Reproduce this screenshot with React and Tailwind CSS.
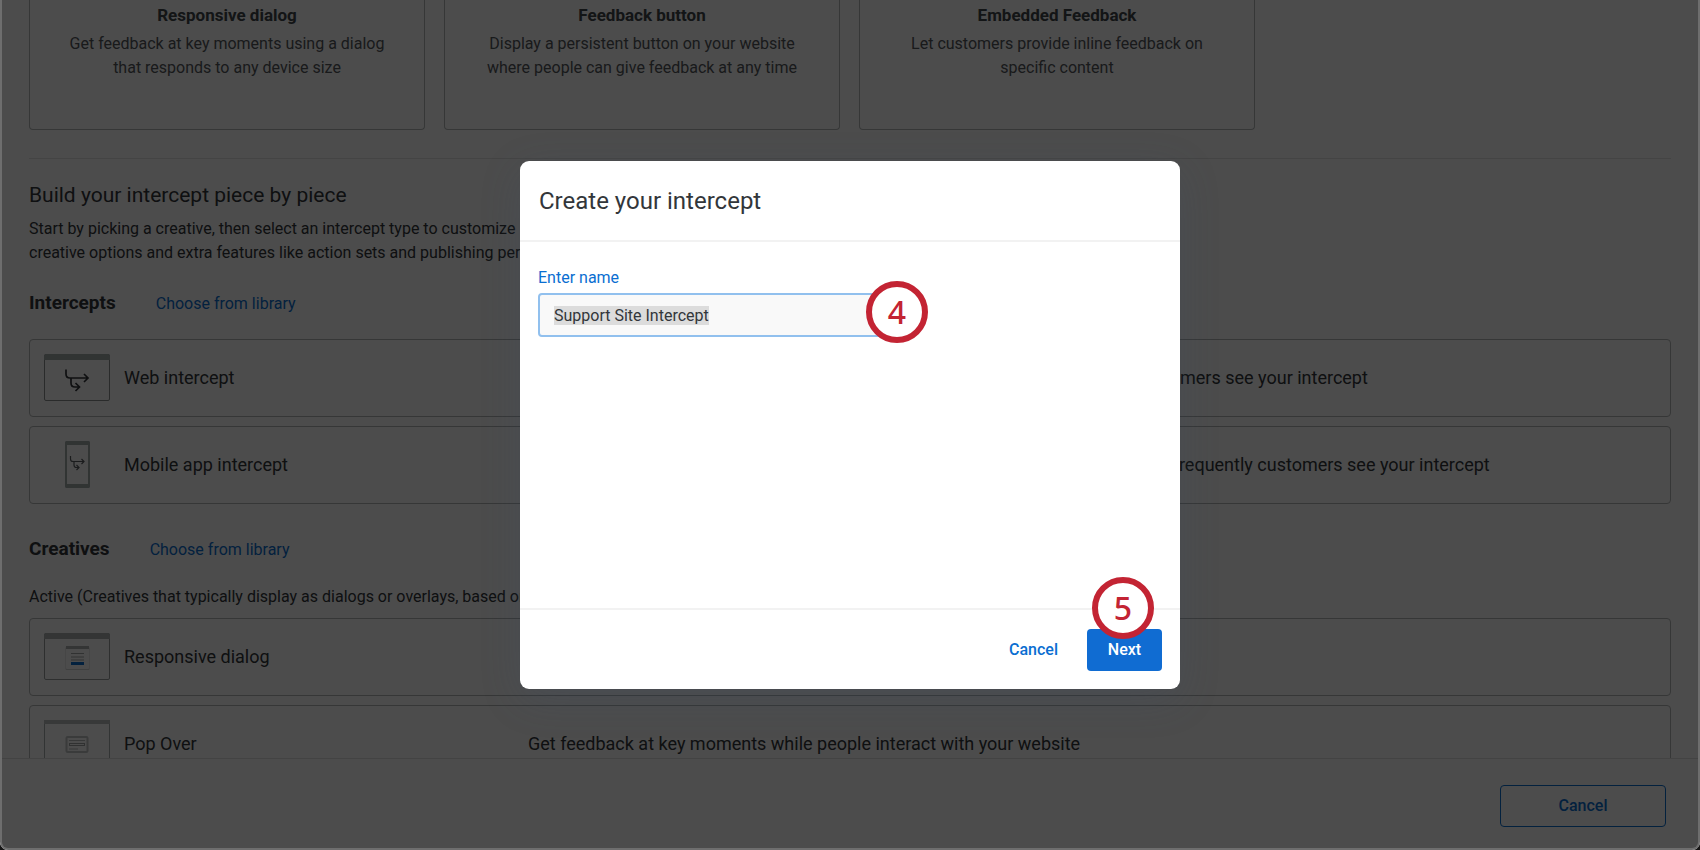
import { useEffect, useRef } from "react";

const templates = [
  { title: "Responsive dialog", text: "Get feedback at key moments using a dialog that responds to any device size" },
  { title: "Feedback button", text: "Display a persistent button on your website where people can give feedback at any time" },
  { title: "Embedded Feedback", text: "Let customers provide inline feedback on specific content" },
];

function WebInterceptIcon() {
  return (
    <svg width="66" height="48" viewBox="0 0 66 48" fill="none" aria-hidden="true">
      <rect x="0.5" y="0.5" width="65" height="46" rx="1.5" stroke="#8d9291" />
      <path d="M0 6V2a2 2 0 0 1 2-2h62a2 2 0 0 1 2 2v4z" fill="#a5adac" />
      <g stroke="#32363a" strokeWidth="1.7">
        <path d="M22 15.500v4.500q0 4 4 4h17.500M40 20l4 4-4 4M27 24v5q0 4 4 4h4.500M31.500 29l4 4-4 4" />
      </g>
    </svg>
  );
}

function MobileInterceptIcon() {
  return (
    <svg width="25" height="48" viewBox="0 0 25 48" fill="none" aria-hidden="true">
      <rect x="1" y="1" width="23" height="45" rx="1" stroke="#a5adac" strokeWidth="2" />
      <path d="M0 2Q0 0 2 0h21q2 0 2 2v2H0zM0 43h25v2q0 2-2 2H2q-2 0-2-2z" fill="#a5adac" />
      <path
        d="M5.500 15v3q0 2.500 2.500 2.500h11M16.500 18l2.500 2.500-2.500 2.500M9 20.500v3.500q0 2.500 2.500 2.500h2.500M11.500 24l2.500 2.500-2.500 2.500"
        stroke="#5a5e62"
        strokeWidth="1.200"
      />
    </svg>
  );
}

function DialogIcon() {
  return (
    <svg width="66" height="48" viewBox="0 0 66 48" fill="none" aria-hidden="true">
      <rect x="0.5" y="0.5" width="65" height="46" rx="1.5" stroke="#9a9e9e" />
      <path d="M0 6V2a2 2 0 0 1 2-2h62a2 2 0 0 1 2 2v4z" fill="#adb3b3" />
      <rect x="21.500" y="14" width="24" height="23" rx="1" fill="#d4d6d6" />
      <rect x="22" y="13" width="23" height="23" rx="1" fill="#fff" />
      <path d="M22 13h23v3H22z" fill="#adb3b3" />
      <path d="M27 20.500h13M27 24h13M27 27h13" stroke="#a4a8a8" />
      <path d="M27 30.500h13" stroke="#0a6ed1" strokeWidth="3" />
    </svg>
  );
}

function PopOverIcon() {
  return (
    <svg width="66" height="48" viewBox="0 0 66 48" fill="none" aria-hidden="true">
      <rect x="0.5" y="0.5" width="65" height="46" stroke="#a9adad" />
      <path d="M0 0h66v4H0z" fill="#bcc0c0" />
      <rect x="22.500" y="17" width="21" height="15" rx="1" fill="#fff" stroke="#c2c6c6" strokeWidth="2" />
      <path d="M25 20.500h16M25 29h9" stroke="#b8bcbc" />
      <rect x="25.500" y="23.500" width="15" height="2" fill="#fff" stroke="#a0a4a4" />
    </svg>
  );
}

function ItemRow({ icon, name, text }) {
  return (
    <li className="flex h-[78px] items-center rounded border border-[#b4b8b8] pl-[14px]">
      <span className="flex w-[66px] shrink-0 justify-center">{icon}</span>
      <span className="w-[418px] shrink-0 pb-0.5 pl-[14px]">{name}</span>
      <span className="pb-0.5 whitespace-nowrap">{text}</span>
    </li>
  );
}

function SectionHeading({ title }) {
  return (
    <div className="flex items-baseline gap-10">
      <h3 className="text-[19px] leading-6 font-bold">{title}</h3>
      <a href="#library" className="text-[16px] leading-6 text-[#0a6ed1]">Choose from library</a>
    </div>
  );
}

function StepBadge({ children, className }) {
  return (
    <span
      className={
        "absolute flex size-[62px] items-center justify-center rounded-full border-6 border-[#c32433] bg-white font-['Noto_Sans',sans-serif] text-[32px] leading-none font-medium text-[#c32433] " +
        className
      }
    >
      {children}
    </span>
  );
}

export default function App() {
  const nameRef = useRef(null);

  useEffect(() => {
    nameRef.current.focus();
    nameRef.current.select();
  }, []);

  return (
    <div className="relative flex h-screen flex-col overflow-hidden bg-white font-[Roboto,sans-serif] text-[16px] text-[#32363a]">
      <main className="min-h-0 flex-1 overflow-hidden px-[29px]">
        <div className="flex gap-[19px]">
          {templates.map((t) => (
            <section key={t.title} className="h-[130px] w-[396px] rounded-b border-x border-b border-[#b4b8b8] px-8 pt-[3px] text-center">
              <h3 className="text-[17px] leading-6 font-bold text-[#42464a]">{t.title}</h3>
              <p className="mt-[5px] leading-6 text-[#54585c]">{t.text}</p>
            </section>
          ))}
        </div>

        <hr className="mt-[28px] border-[#e5e5e5]" />

        <h2 className="mt-[22px] text-[21px] leading-7">Build your intercept piece by piece</h2>
        <p className="mt-2 leading-6">
          Start by picking a creative, then select an intercept type to customize it. You can use more
          <br />
          creative options and extra features like action sets and publishing permissions.
        </p>

        <div className="mt-[26px]">
          <SectionHeading title="Intercepts" />
          <ul className="mt-[23px] flex flex-col gap-[9px] text-[18px]">
            <ItemRow icon={<WebInterceptIcon />} name="Web intercept" text="Customize where your creative displays on your website and how frequently customers see your intercept" />
            <ItemRow icon={<MobileInterceptIcon />} name="Mobile app intercept" text="Customize where your creative displays inside your mobile applications and how frequently customers see your intercept" />
          </ul>
        </div>

        <div className="mt-[33px]">
          <SectionHeading title="Creatives" />
          <p className="mt-[23px] leading-6">Active (Creatives that typically display as dialogs or overlays, based on logic)</p>
          <ul className="mt-[9px] flex flex-col gap-[9px] text-[18px]">
            <ItemRow icon={<DialogIcon />} name="Responsive dialog" text="Get feedback at key moments using a dialog" />
            <ItemRow icon={<PopOverIcon />} name="Pop Over" text="Get feedback at key moments while people interact with your website" />
          </ul>
        </div>
      </main>

      <footer className="flex h-[92px] shrink-0 items-start justify-end border-t border-[#e0e0e0] px-[34px] pt-[26px]">
        <button type="button" className="h-[42px] w-[166px] rounded border border-[#0a6ed1] font-medium text-[#0a6ed1]">Cancel</button>
      </footer>

      <div className="absolute inset-0 flex items-center justify-center rounded-b-lg border-x-2 border-b-2 border-[#6e6e6e] bg-black/70 pt-0.5 shadow-[0_0_0_8px_#161616]">
        <div role="dialog" aria-labelledby="dialog-title" className="flex h-[528px] w-[660px] flex-col rounded-[9px] bg-white shadow-[0_10px_40px_rgba(60,80,110,0.2)]">
          <header className="flex h-[81px] items-center border-b-2 border-[#f2f2f2] px-[19px]">
            <h2 id="dialog-title" className="text-[24px]">Create your intercept</h2>
          </header>
          <div className="flex-1 px-[18px] pt-6">
            <label htmlFor="intercept-name" className="block text-[16px] leading-6 text-[#0a6ed1]">Enter name</label>
            <div className="relative mt-[3px] w-[360px]">
              <input
                ref={nameRef}
                id="intercept-name"
                type="text"
                defaultValue="Support Site Intercept"
                className="h-11 w-full rounded border-2 border-[#91c0ee] bg-[#f9f9f9] px-[14px] text-[16px] outline-none selection:bg-[#dcdcdc] selection:text-[#32363a]"
              />
              <StepBadge className="-top-3 -right-[30px]">4</StepBadge>
            </div>
          </div>
          <footer className="flex h-[81px] items-center justify-end gap-[29px] border-t-2 border-[#f2f2f2] px-[18px]">
            <button type="button" className="font-medium text-[#0a6ed1]">Cancel</button>
            <div className="relative">
              <button type="button" className="h-[42px] w-[75px] rounded bg-[#106cd2] font-medium text-white">Next</button>
              <StepBadge className="-top-[52px] left-[5px]">5</StepBadge>
            </div>
          </footer>
        </div>
      </div>
    </div>
  );
}
